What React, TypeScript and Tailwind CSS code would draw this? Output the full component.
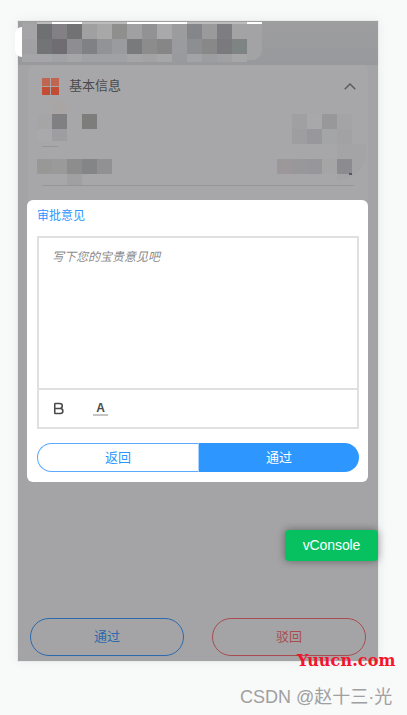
import React from "react";
import { Bold } from "lucide-react";

const font = "font-['Liberation_Sans','Noto_Sans_CJK_SC',sans-serif]";

// mosaic rows, each tile is 15px wide
const headerRows = [
  ["bg-[#a5a5a7]", "bg-[#6f7072]", "bg-[#828084]", "bg-[#727275]", "bg-[#a0a0a1]", "bg-[#a8a8a9]", "bg-[#8f908e]", "bg-[#a0a0a2]", "bg-[#929294]", "bg-[#a9a9ab]", "bg-[#9c9c9e]", "bg-[#85868a]", "bg-[#9a9a9c]", "bg-[#7e7d82]", "bg-[#a3a3a5]"],
  ["bg-[#a1a1a3]", "bg-[#737476]", "bg-[#6f6d71]", "bg-[#8e8e92]", "bg-[#7f8184]", "bg-[#929396]", "bg-[#9a9b9e]", "bg-[#797a7b]", "bg-[#8c8c8d]", "bg-[#868687]", "bg-[#9a9b9f]", "bg-[#8d8e92]", "bg-[#888889]", "bg-[#7a797e]", "bg-[#7e8384]"],
];

const Tiles = ({ tiles, h = "h-[15px]" }: { tiles: string[]; h?: string }) => (
  <div className={`flex ${h}`}>
    {tiles.map((c, i) => (
      <div key={i} className={`w-[15px] ${c}`} />
    ))}
  </div>
);

const App: React.FC = () => {
  return (
    <div className={`relative w-[407px] h-[715px] overflow-hidden bg-[#f8f9f9] pl-[17px] pt-[20px] ${font}`}>
      {/* phone */}
      <div className="relative flex flex-col w-[362px] h-[642px] bg-[#a4a4a6] border border-[#e9eaea] shadow-[0_0_12px_rgba(0,0,0,0.05)]">
        {/* header */}
        <div className="relative h-[44px] pl-[4px] bg-gradient-to-b from-[#9e9e9f] to-[#98999d]">
          <div className="absolute left-[-3px] top-[6px] w-[7px] h-[30px] bg-white rounded-l-full" />
          <div className="absolute left-[4px] top-[1px] w-[240px] h-[38px] bg-[#a3a3a5] rounded-br-[10px]" />
          <div className="relative pt-[1px]">
            <Tiles h="h-[2px]" tiles={["bg-[#a3a3a5]", "bg-[#bcbcbc]", "bg-white", "bg-white", "bg-[#bcbcbc]", "bg-[#bcbcbc]", "bg-[#bcbcbc]", "bg-white", "bg-white", "bg-white", "bg-white", "bg-[#bcbcbc]", "bg-[#bcbcbc]", "bg-[#bcbcbc]", "bg-[#bcbcbc]", "bg-white"]} />
            <Tiles tiles={headerRows[0]} />
            <Tiles tiles={headerRows[1]} />
            <Tiles h="h-[8px]" tiles={["bg-[#a5a5a7]", "bg-[#a5a5a9]", "bg-[#a1a2a5]", "bg-[#a6a6a9]", "bg-[#a0a1a4]", "bg-[#a0a1a4]", "bg-[#a0a1a4]", "bg-[#a5a5a8]", "bg-[#a2a2a5]", "bg-[#a6a6a9]", "bg-[#989a9e]", "bg-[#a2a3a6]", "bg-[#9c9da0]", "bg-[#a0a0a3]", "bg-[#a6a6a8]"]} />
          </div>
        </div>

        {/* info card, its lower part sits under the dialog */}
        <div className="relative h-[200px] mx-[10px] bg-[#a7a7a9] rounded-t-[6px] px-[14px] pt-[11px]">
          <div className="flex items-center h-[20px]">
            <div className="grid grid-cols-2 gap-px w-[17px] h-[17px]">
              <div className="bg-[#c0654f]" />
              <div className="bg-[#c0654f]" />
              <div className="bg-[#c24c34]" />
              <div className="bg-[#c24c34]" />
            </div>
            <span className="ml-[10px] text-[13px] leading-[20px] text-[#4a4a4c]">基本信息</span>
            <svg viewBox="0 0 12 7" className="ml-auto mr-[-2px] w-[12px] h-[7px] text-[#59595b]" fill="none" stroke="currentColor" strokeWidth="1.4">
              <path d="M0.7 6.3 L6 1 L11.3 6.3" />
            </svg>
          </div>

          <div className="relative mt-[18px] ml-[-5px] flex justify-between">
            <div className="absolute left-[15px] top-[-14px] w-[15px] h-[14px] bg-[#aaa5a5]" />
            <div>
              <Tiles tiles={["bg-[#a5a5a6]", "bg-[#808082]", "bg-[#a7a7a9]", "bg-[#7d7d7b]"]} />
              <Tiles h="h-[12px]" tiles={["bg-[#a9a9ab]", "bg-[#9d9da2]"]} />
              <div className="absolute left-[5px] top-[32px] w-[16px] h-px bg-[#959596]" />
            </div>
            <div className="mr-[2px]">
              <Tiles tiles={["bg-[#a0a0a2]", "bg-[#a8a8aa]", "bg-[#98989a]", "bg-[#a4a4a6]"]} />
              <Tiles tiles={["bg-[#9e9ea0]", "bg-[#98989c]", "bg-[#a4a5a7]", "bg-[#a2a2a4]"]} />
            </div>
          </div>

          <div className="relative mt-[15px] ml-[-5px] flex justify-between">
            <div className="absolute left-[30px] top-[15px] w-[15px] h-[11px] bg-[#a0a0a2]" />
            <div className="absolute right-[-12px] top-[-15px] w-[29px] h-[36px] bg-[#a4a4a6] rounded-br-[28px]" />
            <Tiles tiles={["bg-[#989897]", "bg-[#9a9a9a]", "bg-[#8d8d8e]", "bg-[#848586]", "bg-[#919194]"]} />
            <div className="relative mr-[2px]">
              <Tiles tiles={["bg-[#9c9899]", "bg-[#98989b]", "bg-[#97979b]", "bg-[#a5a5a6]", "bg-[#8c8b90]"]} />
              <div className="absolute right-0 bottom-[-1px] w-[3px] h-[2px] bg-[#56566a]" />
            </div>
          </div>
          <div className="mt-[11px] border-b border-[#959597]" />
        </div>

        {/* bottom actions */}
        <div className="mt-auto mb-[5px] mx-[12px] flex justify-between">
          <button className="w-[154px] h-[38px] rounded-full border border-[#2a6aad] text-[13px] text-[#2a6aad]">通过</button>
          <button className="w-[154px] h-[38px] rounded-full border border-[#a94c4f] text-[13px] text-[#a94c4f]">驳回</button>
        </div>

        {/* vConsole button */}
        <div className="absolute right-0 top-[509px] w-[93px] h-[31px] flex items-center justify-center rounded-[4px] bg-[#07c160] text-white text-[14px] tracking-[-0.1px] shadow-[0_0_8px_rgba(0,0,0,0.4)]">
          vConsole
        </div>

        {/* approval dialog */}
        <div className="absolute left-[9px] top-[179px] w-[341px] h-[282px] bg-white rounded-[6px] pl-[10px]">
          <div className="h-[36px] pt-[8px] text-[12px] leading-[17px] text-[#2b96ff]">审批意见</div>
          <div className="w-[322px] h-[193px] flex flex-col border-2 border-[#e0e0e0]">
            <div className="flex-1 px-[13px] pt-[11px] text-[12px] leading-[17px] italic text-[#8a8a8a]">写下您的宝贵意见吧</div>
            <div className="h-[39px] flex items-center border-t-2 border-[#e0e0e0] pl-[12px]">
              <Bold size={15} strokeWidth={2.5} className="text-[#4a4a4a]" />
              <div className="ml-[27px] w-[15px] flex flex-col items-center">
                <span className="text-[12px] leading-[12px] font-bold text-[#4a4a4a]">A</span>
                <div className="w-[15px] h-[2px] bg-[#c4c4c4]" />
              </div>
            </div>
          </div>
          <div className="mt-[14px] w-[322px] h-[29px] flex text-[13px]">
            <button className="w-[161px] h-full rounded-l-full border border-r-0 border-[#5aaaff] text-[#2b96ff]">返回</button>
            <button className="w-[161px] h-full rounded-r-full bg-[#2d96ff] text-white border-l border-[#a9d3ff]">通过</button>
          </div>
        </div>
      </div>

      {/* watermarks */}
      <div className="absolute left-[297px] top-[651px] text-[16px] leading-[20px] font-bold font-['DejaVu_Serif',serif] tracking-[0.1px] text-[#f5142c]">
        Yuucn.com
      </div>
      <div className="absolute left-[240px] top-[685px] text-[18px] leading-[24px] text-[#a0a0a0]">CSDN @赵十三·光</div>
    </div>
  );
};

export default App;
